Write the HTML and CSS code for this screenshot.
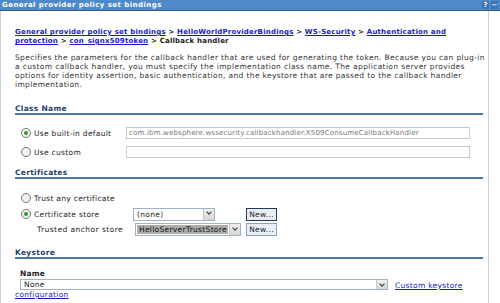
FILE: index.html
```html
<!DOCTYPE html>
<html lang="en">
<head>
    <meta charset="UTF-8">
    <title>Callback handler</title>
    <link rel="stylesheet" href="styles.css">
</head>
<body>
<div class="titlebar">
    <span class="title">General provider policy set bindings</span>
    <span class="tools"><span class="tool">?</span><span class="tool">&minus;</span></span>
</div>
<div class="panel">
    <div class="crumbs"><a href="#">General provider policy set bindings</a> &gt; <a href="#">HelloWorldProviderBindings</a> &gt; <a href="#">WS-Security</a> &gt; <a href="#">Authentication and protection</a> &gt; <a href="#">con_signx509token</a> &gt; Callback handler</div>
    <p class="desc">Specifies the parameters for the callback handler that are used for generating the token. Because you can <span class="nowrap">plug-in</span> a custom callback handler, you must specify the implementation class name. The application server provides options for identity assertion, basic authentication, and the keystore that are passed to the callback handler implementation.</p>

    <h2 class="section first">Class Name</h2>
    <div class="rows">
        <div class="row">
            <label class="opt"><span class="radio on"></span>Use built-in default</label>
            <div class="text">com.ibm.websphere.wssecurity.callbackhandler.X509ConsumeCallbackHandler</div>
        </div>
        <div class="row">
            <label class="opt"><span class="radio"></span>Use custom</label>
            <div class="text"></div>
        </div>
    </div>

    <h2 class="section">Certificates</h2>
    <div class="certs">
        <label class="opt trust"><span class="radio"></span>Trust any certificate</label>
        <label class="opt"><span class="radio on"></span>Certificate store</label>
        <div class="select none"><span class="val">(none)</span><span class="arrow"></span></div>
        <button class="btn focus">New...</button>
        <span class="sub">Trusted anchor store</span>
        <div class="select store"><span class="val sel">HelloServerTrustStore</span><span class="arrow"></span></div>
        <button class="btn">New...</button>
    </div>

    <h2 class="section">Keystore</h2>
    <div class="keystore">
        <div class="name">Name</div>
        <div class="ks-row">
            <div class="select wide"><span class="val">None</span><span class="arrow"></span></div>
            <a href="#" class="ks-link">Custom keystore</a>
        </div>
        <a href="#" class="ks-link">configuration</a>
    </div>
</div>
</body>
</html>
```

FILE: styles.css
```css
body {
    margin: 0;
    width: 500px;
    height: 303px;
    overflow: hidden;
    background: #fff;
    font-family: 'DejaVu Sans', Verdana, sans-serif;
    font-size: 7px;
    color: #333;
}

a {
    color: #1a1acc;
}

.nowrap {
    white-space: nowrap;
}

.titlebar {
    display: flex;
    align-items: center;
    justify-content: space-between;
    height: 10px;
    padding-left: 2px;
    background: #4f89c7;
    border-bottom: 1px solid #2d5a8c;
    color: #fff;
    font-weight: bold;
    letter-spacing: 0.45px;
}

.tools {
    display: flex;
    gap: 2px;
    margin-right: 2px;
}

.tool {
    width: 7px;
    height: 8px;
    line-height: 8px;
    text-align: center;
    background: #3e74b0;
    letter-spacing: 0;
}

.panel {
    width: 473px;
    height: 292px;
    padding-left: 14px;
    border-left: 1px solid #cfcfcf;
    border-right: 1px solid #cfcfcf;
}

.crumbs {
    padding-top: 17px;
    width: 450px;
    font-weight: bold;
    line-height: 9px;
    letter-spacing: 0.2px;
    color: #222;
}

.desc {
    margin: 7px 0 0;
    width: 472px;
    font-size: 7.5px;
    line-height: 9px;
    letter-spacing: 0.36px;
}

.section {
    margin: 0;
    width: 468px;
    font-size: 7.5px;
    line-height: 9px;
    letter-spacing: 0.3px;
    color: #1c3f6e;
    border-bottom: 2px solid #4b74a3;
}

.section.first {
    margin-top: 15px;
}

.rows {
    display: flex;
    flex-direction: column;
    gap: 7px;
    padding: 12px 0 10px 6px;
}

.row {
    display: flex;
    align-items: center;
}

.opt {
    display: flex;
    align-items: center;
    gap: 3px;
    width: 105px;
    font-size: 7.5px;
    letter-spacing: 0.3px;
    color: #222;
}

.radio {
    position: relative;
    width: 8px;
    height: 8px;
    border: 1px solid #777;
    border-radius: 50%;
    background: #f4f4f4;
}

.radio.on::after {
    content: "";
    position: absolute;
    left: 2px;
    top: 2px;
    width: 4px;
    height: 4px;
    border-radius: 50%;
    background: #2c9a2c;
}

.text {
    width: 340px;
    height: 10px;
    line-height: 10px;
    padding-left: 2px;
    border: 1px solid #c9c9c9;
    letter-spacing: 0.18px;
    color: #777;
}

.certs {
    display: grid;
    grid-template-columns: 112px 113px auto;
    align-items: center;
    row-gap: 2.5px;
    padding: 14px 0 12px 6px;
}

.certs .trust {
    grid-column: 1 / 4;
    margin-bottom: 2px;
}

.sub {
    padding-left: 16px;
    font-size: 7.5px;
    letter-spacing: 0.45px;
    color: #222;
}

.select {
    display: flex;
    align-items: center;
    height: 11px;
    border: 1px solid #9fb2c7;
    background: #fff;
    font-size: 7.5px;
    letter-spacing: 0.3px;
}

.select .val {
    flex: 1;
    padding-left: 3px;
    color: #222;
    white-space: nowrap;
    overflow: hidden;
}

.select .val.sel {
    margin: 1px;
    padding-left: 2px;
    background: #adadad;
    color: #111;
}

.arrow {
    position: relative;
    flex: none;
    width: 10px;
    height: 100%;
    border-left: 1px solid #c8c8c8;
    background: linear-gradient(#f0f0f0, #d6d6d6);
}

.arrow::after {
    content: "";
    position: absolute;
    left: 3px;
    top: 1.5px;
    width: 3px;
    height: 3px;
    border-right: 1.5px solid #333;
    border-bottom: 1.5px solid #333;
    transform: rotate(45deg);
}

.select.none {
    width: 80px;
}

.select.store {
    width: 104px;
    margin-left: 2px;
}

.select.wide {
    width: 366px;
    height: 9px;
}

.btn {
    justify-self: start;
    width: 31px;
    height: 13px;
    padding: 0;
    font-family: inherit;
    font-size: 7.5px;
    letter-spacing: 0.3px;
    color: #222;
    background: #e8eef6;
    border: 1px solid #8aa3c0;
}

.btn.focus {
    border-color: #243a55;
}

.keystore {
    padding: 10px 0 0 5px;
}

.name {
    height: 10px;
    font-weight: bold;
    font-size: 7.5px;
    letter-spacing: 0.2px;
    color: #222;
}

.ks-row {
    display: flex;
    align-items: flex-end;
    gap: 7px;
}

.ks-link {
    font-size: 7.5px;
    letter-spacing: 0.3px;
}

.keystore > .ks-link {
    display: block;
    margin-left: -5px;
}
```
